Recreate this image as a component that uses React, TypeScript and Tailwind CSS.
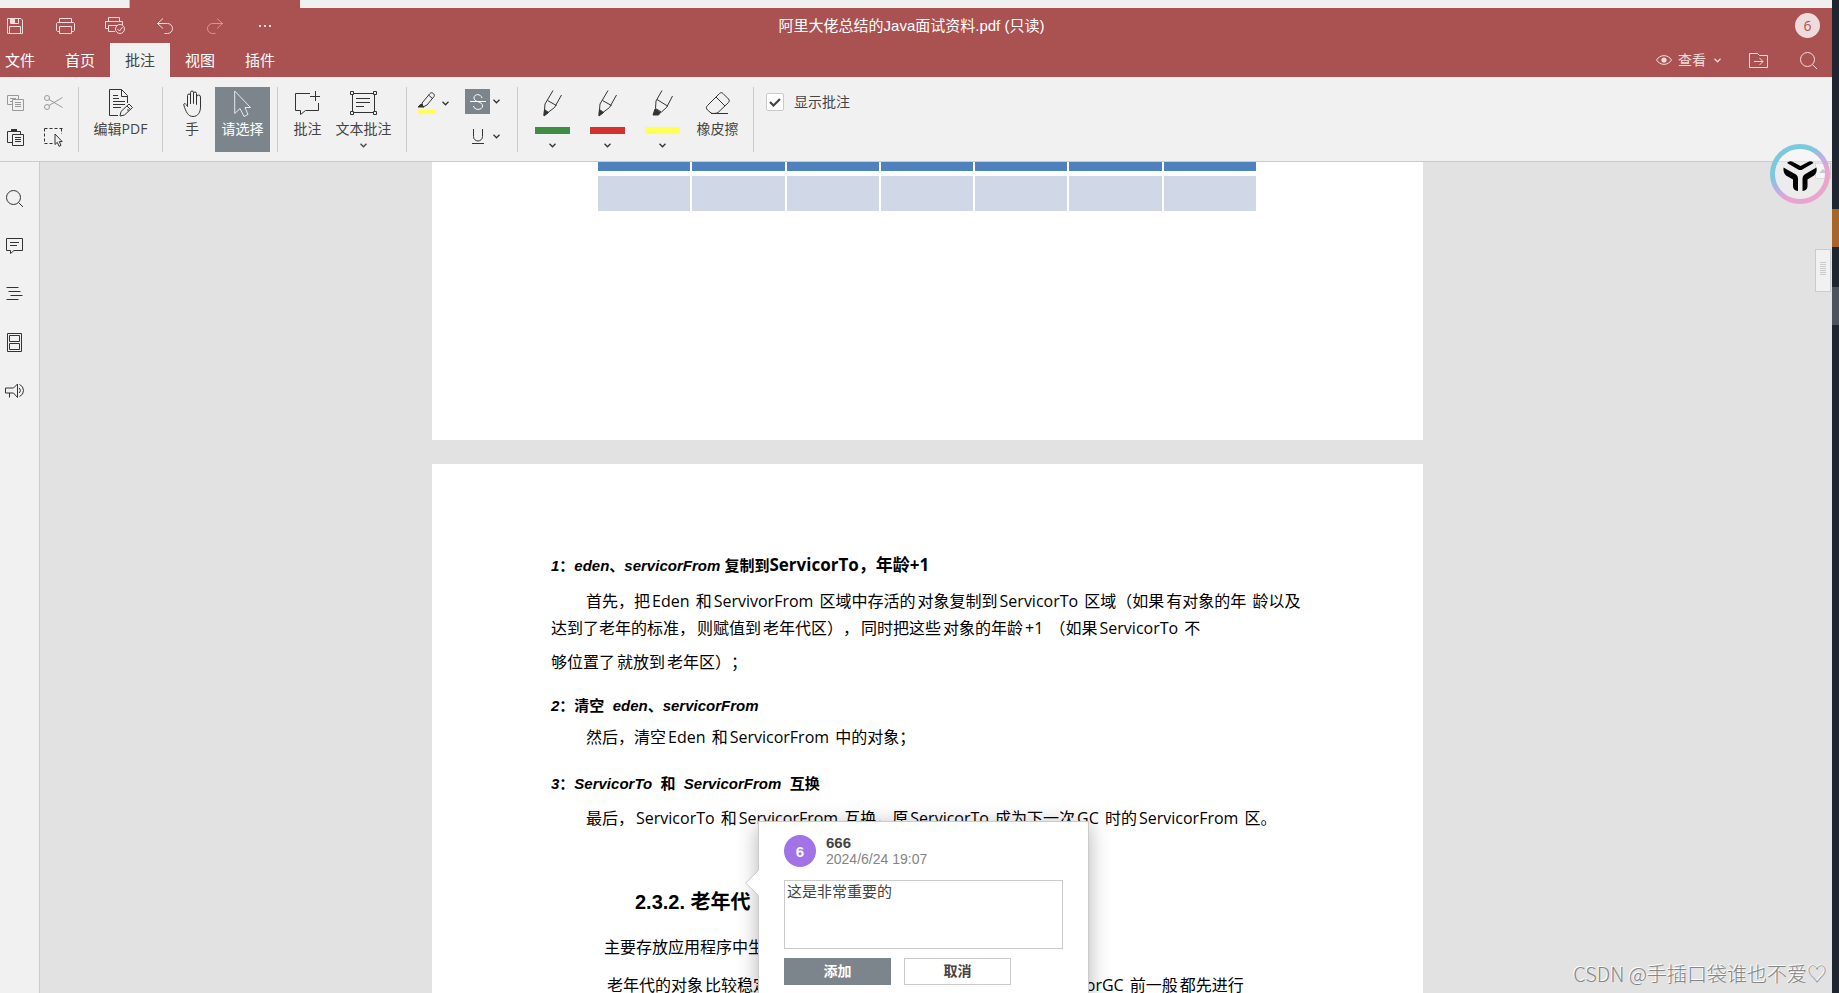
import React, { useState } from "react";
import clsx from "clsx";

type IconProps = {
  w: number;
  h: number;
  children: React.ReactNode;
  className?: string;
};

function Icon({ w, h, children, className }: IconProps) {
  return (
    <svg
      width={w}
      height={h}
      viewBox={`0 0 ${w} ${h}`}
      fill="none"
      stroke="currentColor"
      className={clsx("shrink-0 overflow-visible", className)}
      aria-hidden="true"
    >
      {children}
    </svg>
  );
}

function Chevron() {
  return (
    <Icon w={7} h={5}>
      <path d="M.5 .8L3.5 3.8L6.5 .8" strokeWidth="1.3" />
    </Icon>
  );
}

function Separator() {
  return <div className="w-px h-[65px] shrink-0 bg-[#cbcbcb]" />;
}

const saveIcon = (
  <Icon w={16} h={16}>
    <path d="M.5 .5H14L15.5 2V15.5H.5ZM3.5 .5V5.5H11.5V.5M2.5 15.5V8.5H13.5V15.5" />
    <path d="M4 1H8V5H4Z" fill="currentColor" stroke="none" />
  </Icon>
);

const printIcon = (
  <Icon w={19} h={16}>
    <path d="M3.5 4.5V.5H15.5V4.5M3.5 13.5H1.5L.5 12.5V5.5L1.5 4.5H17.5L18.5 5.5V12.5L17.5 13.5H15.5M3.5 8.5H15.5V15.5H3.5Z" />
  </Icon>
);

const quickPrintIcon = (
  <Icon w={20} h={17}>
    <path d="M3.5 4.5V.5H14.5V4.5M3.5 11.5H.5V4.5H17.5V8M10 14.5H3.5V8.5H12" />
    <circle cx="15" cy="12" r="4.5" />
    <path d="M12.5 12L14.5 14L17.5 10" />
  </Icon>
);

const undoIcon = (
  <Icon w={16} h={16}>
    <path d="M6 .5L.5 5.5L6 10.5M.5 5.5H10.5A5 5 0 0 1 10.5 15.5H7.5" />
  </Icon>
);

const redoIcon = (
  <Icon w={16} h={16} className="opacity-50">
    <path d="M10 .5L15.5 5.5L10 10.5M15.5 5.5H5.5A5 5 0 0 0 5.5 15.5H8.5" />
  </Icon>
);

const dotsIcon = (
  <Icon w={12} h={2}>
    <path d="M0 1H2M5 1H7M10 1H12" strokeWidth="2" />
  </Icon>
);

const eyeIcon = (
  <Icon w={16} h={10}>
    <path d="M.5 5C4 -.8 12 -.8 15.5 5C12 10.8 4 10.8 .5 5Z" />
    <circle cx="8" cy="5" r="2.6" fill="currentColor" stroke="none" />
  </Icon>
);

const folderIcon = (
  <Icon w={19} h={15}>
    <path d="M.5 .5H8.5L10.5 2.5H18.5V14.5H.5ZM5 8.5H14M10.5 5L14 8.5L10.5 12" />
  </Icon>
);

const searchIcon = (
  <Icon w={17} h={17}>
    <circle cx="7.5" cy="7.5" r="7" />
    <path d="M12.5 12.5L17 17" />
  </Icon>
);

const copyIcon = (
  <Icon w={17} h={16}>
    <path d="M5 9.5H.5V.5H11.5V4M3 3.5H9M3 6.5H5M5.5 4.5H16.5V15.5H5.5ZM8 7.5H14M8 9.5H14M8 11.5H14" />
  </Icon>
);

const cutIcon = (
  <Icon w={19} h={15}>
    <circle cx="3" cy="3" r="2.5" />
    <circle cx="3" cy="12" r="2.5" />
    <path d="M5 4.5L18.5 12.5M5 10.5L18.5 2.5" />
  </Icon>
);

const pasteIcon = (
  <Icon w={17} h={17}>
    <path d="M5 13.5H.5V2.5H13.5V5M5.5 5.5H16.5V16.5H5.5ZM8 8.5H14M8 10.5H14M8 12.5H14" />
    <path d="M4 0H10V3H4Z" fill="currentColor" stroke="none" />
  </Icon>
);

const selectIcon = (
  <Icon w={19} h={19}>
    <path d="M.5 .5H18.5M.5 .5V15.5M17.5 .5V6M.5 15.5H10" strokeDasharray="3 2" />
    <path d="M11 6V16.5L13.3 14.3L15 18.3L17 17.4L15.3 13.6H18.2Z" fill="#f1f1f1" />
  </Icon>
);

const editPdfIcon = (
  <Icon w={24} h={28}>
    <path d="M9 26.5H.5V.5H12.5L18.5 6.5V14M19 20V22M12.5 .5V7.5H19M4 6.5H9M4 9.5H10M4 12.5H16M4 15.5H16M4 18.5H12" />
    <path d="M11 27L12 22.5L20 15L23.5 18.5L15.5 26ZM18 17L21.5 20.5" />
  </Icon>
);

const handIcon = (
  <Icon w={18} h={27}>
    <path d="M4.5 16.5V5.5A1.5 1.5 0 0 1 7.5 5.5V14V2.5A1.5 1.5 0 0 1 10.5 2.5V13.5V3.5A1.5 1.5 0 0 1 13.5 3.5V14.5V7A1.5 1.5 0 0 1 17.5 7V17C17.5 22 15 26.5 10 26.5C5 26.5 3 22 .8 15C.3 13 3 13 4.5 16.5" />
  </Icon>
);

const arrowIcon = (
  <Icon w={17} h={27}>
    <path d="M.7 1V23.5L6 18.5L10 26.5L14 24.5L11 17.5H16.5Z" />
  </Icon>
);

const commentIcon = (
  <Icon w={25} h={24}>
    <path d="M15 2.5H.5V19.5H5.5V23.5L10.5 19.5H23.5V12M20.5 0V10M15 5.5H25" />
  </Icon>
);

const textCommentIcon = (
  <Icon w={27} h={24}>
    <path d="M3.5 2.5H23.5M3.5 21.5H23.5M2.5 3.5V20.5M24.5 3.5V20.5M6 7.5H20M6 11.5H20M6 15.5H14" />
    <path d="M.5 .5H3.5V3.5H.5ZM23.5 .5H26.5V3.5H23.5ZM.5 20.5H3.5V23.5H.5ZM23.5 20.5H26.5V23.5H23.5Z" fill="#f1f1f1" />
  </Icon>
);

const highlightIcon = (
  <Icon w={18} h={22}>
    <path d="M4 11L12 1.5C13.5 -.5 17.5 2 16 4.5L9 13L5 15ZM10.5 3L14.5 6.5" />
    <path d="M3 12L6 15H0Z" fill="currentColor" />
    <path d="M0 18H18V22H0Z" fill="#ffff54" stroke="none" />
  </Icon>
);

const strikeIcon = (
  <Icon w={16} h={16}>
    <path d="M12 4C11 -.5 4 -.5 4 4C4 8.5 12.5 7 12.5 12C12.5 16.5 4 16.5 3.5 12M0 7.5H16" />
  </Icon>
);

const underlineIcon = (
  <Icon w={12} h={15}>
    <path d="M1.5 0V7.5A4.5 4.5 0 0 0 10.5 7.5V0M0 14.5H12" />
  </Icon>
);

const penIcon = (
  <Icon w={20} h={27}>
    <path d="M10 .5L2 14L1 25.5L11.5 17.5L18.5 5M4.5 10.5L13.5 15.5" />
    <path d="M1.5 19.5L5.5 22.5L1 26Z" fill="currentColor" />
  </Icon>
);

const markerIcon = (
  <Icon w={21} h={27}>
    <path d="M10 .5L4 11L3.5 18.5M9.5 22L14.5 17.5L20.5 6M5 9.5L15.5 16M3.5 18.5L9.5 22" />
    <path d="M3 19L8.5 22.5L6.5 25H1Z" fill="currentColor" />
  </Icon>
);

const eraserIcon = (
  <Icon w={24} h={22}>
    <path d="M1.5 13.5L13.5 1.5C14.5 .5 16 .3 17 1.5L22.5 7C23.5 8.5 23.5 9.5 22.5 10.5L12 20.5C11 21.5 6 21.8 5 21L1.5 18C0 16.5 0 15 1.5 13.5ZM10 5L19 14M5 21.5H22" />
  </Icon>
);

const chatIcon = (
  <Icon w={17} h={16}>
    <path d="M.5 .5H16.5V12.5H8L4.5 15.5V12.5H.5ZM4 4.5H13M4 7.5H11" />
  </Icon>
);

const outlineIcon = (
  <Icon w={17} h={14}>
    <path d="M.5 .5H12.5M2.5 4.5H14.5M4.5 8.5H16.5M.5 12.5H12.5" />
  </Icon>
);

const thumbsIcon = (
  <Icon w={15} h={19}>
    <path d="M.5 .5H14.5V18.5H.5ZM2.5 2.5H12.5V8.5H2.5ZM2.5 10.5H12.5V16.5H2.5Z" />
  </Icon>
);

const speakerIcon = (
  <Icon w={19} h={15}>
    <path d="M.5 5H8.5L12.5 1V14.5L8.5 10H.5ZM4.5 10V14.5M14 5A3 3 0 0 1 14 10M14.5 1.5A6.5 6.5 0 0 1 14.5 13.5" />
  </Icon>
);

const quickActions = [
  { label: "打印", icon: printIcon },
  { label: "快速打印", icon: quickPrintIcon },
  { label: "撤消", icon: undoIcon },
  { label: "重做", icon: redoIcon },
  { label: "更多", icon: dotsIcon },
];

const tabs = ["首页", "批注", "视图", "插件"];

const sideItems = [
  { label: "搜索", icon: searchIcon },
  { label: "评论", icon: chatIcon },
  { label: "标题", icon: outlineIcon },
  { label: "缩略图", icon: thumbsIcon },
  { label: "反馈", icon: speakerIcon },
];

const pens = [
  { label: "绿色笔", icon: penIcon, color: "bg-[#3d8d44]" },
  { label: "红色笔", icon: penIcon, color: "bg-[#d43230]" },
  { label: "荧光笔", icon: markerIcon, color: "bg-[#ffff54]" },
];

type ToolProps = {
  label: string;
  icon: React.ReactNode;
  width: string;
  active?: boolean;
  menu?: boolean;
};

function Tool({ label, icon, width, active, menu }: ToolProps) {
  return (
    <button
      className={clsx(
        "h-[65px] shrink-0 flex flex-col items-center whitespace-nowrap text-sm leading-5",
        width,
        active ? "bg-[#7d858c] text-white" : "text-[#444]"
      )}
    >
      <span className={clsx("h-8 flex items-center justify-center", active ? "text-[#e6e8ea]" : "text-[#333]")}>
        {icon}
      </span>
      <span>{label}</span>
      {menu && (
        <span className="mt-1">
          <Chevron />
        </span>
      )}
    </button>
  );
}

function Header() {
  return (
    <header className="bg-[#aa5252] text-[#f3dcdc]">
      <div className="h-[35px] flex items-center">
        <div className="w-[290px] flex items-center">
          <button aria-label="保存" className="w-10 h-8 pl-[7px]">
            {saveIcon}
          </button>
          {quickActions.map((a) => (
            <button key={a.label} aria-label={a.label} className="w-[50px] h-8 flex items-center justify-center">
              {a.icon}
            </button>
          ))}
        </div>
        <h1 className="flex-1 text-center text-[15px] leading-5 text-white font-['Liberation_Sans','Noto_Sans_CJK_SC',sans-serif]">
          阿里大佬总结的Java面试资料.pdf (只读)
        </h1>
        <div className="w-[299px] flex justify-end pr-3">
          <span className="size-[25px] rounded-full bg-[#eedcdc] text-[#aa5252] text-sm flex items-center justify-center">6</span>
        </div>
      </div>

      <div className="h-[34px] flex items-center justify-between">
        <nav className="h-full flex text-[15px]">
          <button className="w-[50px] pl-[5px] text-left text-white">文件</button>
          {tabs.map((tab) => (
            <button
              key={tab}
              className={clsx("w-[60px]", tab === "批注" ? "bg-[#f1f1f1] text-[#444]" : "text-white")}
            >
              {tab}
            </button>
          ))}
        </nav>
        <div className="flex items-center pr-[15px]">
          <button className="flex items-center gap-1.5 text-sm mr-7">
            {eyeIcon}
            查看
            <span className="ml-0.5">
              <Chevron />
            </span>
          </button>
          <button aria-label="打开文件位置" className="mr-8">
            {folderIcon}
          </button>
          <button aria-label="搜索">{searchIcon}</button>
        </div>
      </div>
    </header>
  );
}

function Toolbar() {
  const [show, setShow] = useState(true);

  return (
    <div className="h-[85px] pt-2.5 flex items-start bg-[#f1f1f1] border-b border-[#cbcbcb] text-[#333]">
      <div className="w-[78px] pl-[7px] pt-1.5 grid grid-cols-[37px_20px] gap-y-4">
        <button aria-label="复制" className="h-[19px] flex items-center text-[#999]">{copyIcon}</button>
        <button aria-label="剪切" className="h-[19px] flex items-center text-[#999]">{cutIcon}</button>
        <button aria-label="粘贴" className="h-[19px] flex items-center">{pasteIcon}</button>
        <button aria-label="全选" className="h-[19px] flex items-center">{selectIcon}</button>
      </div>
      <Separator />
      <Tool label="编辑PDF" icon={editPdfIcon} width="w-[83px]" />
      <Separator />
      <div className="flex pl-1.5 pr-[7px]">
        <Tool label="手" icon={handIcon} width="w-[46px]" />
        <Tool label="请选择" icon={arrowIcon} width="w-[55px]" active />
      </div>
      <Separator />
      <div className="w-32 flex pl-[7px]">
        <Tool label="批注" icon={commentIcon} width="w-[45px]" />
        <Tool label="文本批注" icon={textCommentIcon} width="w-[67px]" menu />
      </div>
      <Separator />
      <div className="w-[110px] pl-[11px] flex gap-4">
        <div className="h-8 flex items-center gap-1.5">
          <button aria-label="高亮">{highlightIcon}</button>
          <button aria-label="高亮颜色"><Chevron /></button>
        </div>
        <div className="pt-0.5 flex flex-col gap-2.5">
          <div className="flex items-center gap-[3px]">
            <button aria-label="删除线" className="size-[25px] flex items-center justify-center bg-[#7d858c] text-white">
              {strikeIcon}
            </button>
            <button aria-label="删除线颜色"><Chevron /></button>
          </div>
          <div className="flex items-center gap-[3px]">
            <button aria-label="下划线" className="size-[25px] flex items-center justify-center">{underlineIcon}</button>
            <button aria-label="下划线颜色"><Chevron /></button>
          </div>
        </div>
      </div>
      <Separator />
      <div className="w-[235px] flex pl-[7px]">
        {pens.map((pen) => (
          <button key={pen.label} aria-label={pen.label} className="w-[55px] h-[65px] flex flex-col items-center text-[#333]">
            <span className="h-8 flex items-center">{pen.icon}</span>
            <span className={clsx("w-[35px] h-[7px] mt-2 mb-[9px]", pen.color)} />
            <Chevron />
          </button>
        ))}
        <Tool label="橡皮擦" icon={eraserIcon} width="w-[55px]" />
      </div>
      <Separator />
      <label className="pl-3 pt-1.5 flex items-center gap-2.5 text-sm leading-[18px] text-[#444]">
        <span className="grid place-items-center">
          <input
            type="checkbox"
            checked={show}
            onChange={() => setShow(!show)}
            className="[grid-area:1/1] appearance-none size-[18px] bg-white border border-[#cbcbcb] rounded-xs"
          />
          {show && (
            <Icon w={12} h={9} className="[grid-area:1/1] pointer-events-none">
              <path d="M1 4L4.5 7.5L11 1" strokeWidth="2.2" />
            </Icon>
          )}
        </span>
        显示批注
      </label>
    </div>
  );
}

function CommentPopover() {
  const [text, setText] = useState("这是非常重要的");

  return (
    <div className="absolute left-[326px] top-[357px] w-[331px] pt-[13px] px-[25px] pb-6 bg-white border border-[#cbcbcb] shadow-[0_4px_20px_rgba(0,0,0,0.3)] font-['Liberation_Sans','Noto_Sans_CJK_SC',sans-serif] text-[#444]">
      <svg width="14" height="26" viewBox="0 0 14 26" className="absolute -left-3.5 top-12" aria-hidden="true">
        <path d="M14 0L.7 13L14 26Z" fill="#fff" />
        <path d="M13.5 .5L.7 13L13.5 25.5" fill="none" stroke="#cbcbcb" />
      </svg>
      <div className="flex gap-2.5">
        <span className="size-8 rounded-full bg-[#a173e6] text-white text-[15px] font-bold flex items-center justify-center">6</span>
        <div className="leading-4">
          <p className="text-[15px] leading-4 font-bold">666</p>
          <p className="text-sm leading-4 text-[#848484]">2024/6/24 19:07</p>
        </div>
      </div>
      <textarea
        aria-label="批注内容"
        value={text}
        onChange={(e) => setText(e.target.value)}
        className="block w-full h-[69px] mt-[13px] px-0.5 text-[15px] leading-[22px] bg-white border border-[#cbcbcb] resize-none outline-none"
      />
      <div className="flex gap-[13px] mt-[9px] text-sm leading-5 font-bold">
        <button className="w-[107px] h-[27px] pb-0.5 bg-[#7d858c] text-white">添加</button>
        <button className="w-[107px] h-[27px] pb-0.5 bg-white border border-[#cbcbcb]">取消</button>
      </div>
    </div>
  );
}

// One line of mixed Chinese and Latin text
function Runs({ parts }: { parts: string[] }) {
  return (
    <span className="flex gap-0.5 whitespace-pre">
      {parts.map((part, i) => (
        <span key={i}>{part}</span>
      ))}
    </span>
  );
}

const headingFont =
  "text-[15px] leading-7 font-bold italic [font-synthesis-style:none] font-['Liberation_Sans','Noto_Sans_CJK_SC',sans-serif]";

function DocumentPages() {
  return (
    <main className="flex-1 min-w-0 flex flex-col items-center gap-6 overflow-hidden">
      <section className="w-[991px] h-[278px] shrink-0 bg-white pl-[166px]">
        <table className="w-[660px] table-fixed border-separate border-spacing-0">
          <thead>
            <tr>
              {[0, 1, 2, 3, 4, 5, 6].map((c) => (
                <th key={c} className="h-3.5 p-0 bg-[#4f81bd] border-r-2 border-b-[5px] border-white" />
              ))}
            </tr>
          </thead>
          <tbody>
            <tr>
              {[0, 1, 2, 3, 4, 5, 6].map((c) => (
                <td key={c} className="h-[35px] p-0 bg-[#d0d7e6] border-r-2 border-white" />
              ))}
            </tr>
          </tbody>
        </table>
      </section>

      <section className="relative w-[991px] h-[1400px] shrink-0 bg-white pt-[87px] pl-[119px] text-black text-base leading-[27px] whitespace-nowrap [text-spacing-trim:space-all] font-['Open_Sans','Noto_Sans_CJK_SC',sans-serif]">
        <h3 className={clsx(headingFont, "h-7")}>
          1：eden、servicorFrom 复制到
          <span className="not-italic text-[17px] leading-7 font-['Open_Sans','Noto_Sans_CJK_SC',sans-serif]">ServicorTo，年龄+1</span>
        </h3>
        <p className="mt-[9px] pl-[35px]">
          <Runs parts={["首先，把", "Eden ", "和", "ServivorFrom ", "区域中存活的", "对象复制到", "ServicorTo ", "区域（如果", "有对象的年 ", "龄以及"]} />
        </p>
        <p>
          <Runs parts={["达到了老年的标准，", "则赋值到", "老年代区），", "同时把这些", "对象的年龄", "+1 ", "（如果", "ServicorTo ", "不"]} />
        </p>
        <p className="mt-[7px]">
          <Runs parts={["够位置了", "就放到", "老年区）；"]} />
        </p>

        <h3 className={clsx(headingFont, "mt-4")}>2：清空&nbsp; eden、servicorFrom</h3>
        <p className="mt-1 pl-[35px]">
          <Runs parts={["然后，清空", "Eden ", "和", "ServicorFrom ", "中的对象；"]} />
        </p>

        <h3 className={clsx(headingFont, "mt-[19px]")}>3：ServicorTo&nbsp; 和&nbsp; ServicorFrom&nbsp; 互换</h3>
        <p className="mt-[7px] pl-[35px]">
          <Runs parts={["最后，", "ServicorTo ", "和", "ServicorFrom ", "互换，原", "ServicorTo ", "成为下一次", "GC ", "时的", "ServicorFrom ", "区。"]} />
        </p>

        <h2 className="mt-14 pl-[84px] text-xl leading-7 font-bold font-['Liberation_Sans','Noto_Sans_CJK_SC',sans-serif]">2.3.2. 老年代</h2>
        <p className="mt-[18px] pl-[53px]">主要存放应用程序中生命周期长的内存对象。</p>
        <p className="mt-[11px] pl-14">
          <Runs parts={["老年代的对象", "比较稳定，", "所以", "MajorGC ", "不会", "频繁执行。", "在进行", "MajorGC ", "前一般", "都先进行"]} />
        </p>

        <CommentPopover />
      </section>
    </main>
  );
}

function Scrollbar() {
  return (
    <div className="w-[17px] shrink-0 pt-px pr-px flex flex-col">
      <button aria-label="向上滚动" className="h-4 border border-[#cbcbcb] bg-[#f1f1f1] flex items-center justify-center text-[#adadad]">
        <Icon w={8} h={4}>
          <path d="M0 4L4 0L8 4Z" fill="currentColor" stroke="none" />
        </Icon>
      </button>
      <div className="mt-[70px] h-[43px] pb-1 border border-[#cbcbcb] bg-[#f1f1f1] flex items-center justify-center text-[#cbcbcb]">
        <Icon w={6} h={13}>
          <path d="M0 .5H6M0 2.5H6M0 4.5H6M0 6.5H6M0 8.5H6M0 10.5H6M0 12.5H6" />
        </Icon>
      </div>
    </div>
  );
}

function FloatingLogo() {
  return (
    <svg width="60" height="60" viewBox="0 0 60 60" className="absolute right-[9px] top-36" aria-hidden="true">
      <defs>
        <linearGradient id="ring" x1="0.2" y1="0.1" x2="0.8" y2="0.9">
          <stop offset="0.25" stopColor="#7cc8dc" />
          <stop offset="0.5" stopColor="#bfaee6" />
          <stop offset="0.75" stopColor="#eba3cf" />
        </linearGradient>
      </defs>
      <circle cx="30" cy="30" r="27.5" fill="#fff" fillOpacity="0.35" stroke="url(#ring)" strokeWidth="5" />
      <g fill="#000">
        <path d="M17 19Q19 16.5 22 17.5L30.5 22L39 17.5Q42 16.5 43.5 19L31.5 26H29Z" />
        <path d="M13.5 23.5L26 30.5Q28 32 28 34.5V47Q23 46.5 23 42V35.5L16 31.5Q13 29 13.5 23.5Z" />
        <path d="M46.5 23.5L34.5 30.5Q32.5 32 32.5 34.5V47Q37.5 46.5 37.5 42V35.5L44 31.5Q47.5 29 46.5 23.5Z" />
      </g>
    </svg>
  );
}

export default function App() {
  return (
    <div className="relative h-screen flex overflow-hidden bg-[#1f2630] font-['Open_Sans','Noto_Sans_CJK_SC',sans-serif]">
      <div className="flex-1 min-w-0 flex flex-col">
        {/* Window strip */}
        <div className="h-2 shrink-0 bg-[#f0f0f0] pl-[129px]">
          <div className="w-[171px] h-full bg-[#aa5252] border-l border-[#bbb]" />
        </div>
        <Header />
        <Toolbar />

        <div className="flex-1 min-h-0 flex bg-[#e2e2e2]">
          <aside className="w-10 shrink-0 pt-3 bg-[#f1f1f1] border-r border-[#cbcbcb] text-[#333]">
            {sideItems.map((item) => (
              <button key={item.label} aria-label={item.label} className="w-7 h-12 flex items-center justify-center">
                {item.icon}
              </button>
            ))}
          </aside>
          <DocumentPages />
          <Scrollbar />
        </div>
      </div>

      {/* Desktop behind the window */}
      <div className="w-[7px] shrink-0 pt-[209px]">
        <div className="h-[38px] bg-[#a9642c]" />
        <div className="h-[38px] mt-10 bg-[#4d535d]" />
      </div>

      <FloatingLogo />
      <p className="absolute right-3 bottom-[5px] text-xl leading-7 font-light text-[#858585] [text-shadow:-1px_-1px_0_#fff] font-['Noto_Sans_CJK_SC',sans-serif]">
        CSDN @手插口袋谁也不爱♡
      </p>
    </div>
  );
}
